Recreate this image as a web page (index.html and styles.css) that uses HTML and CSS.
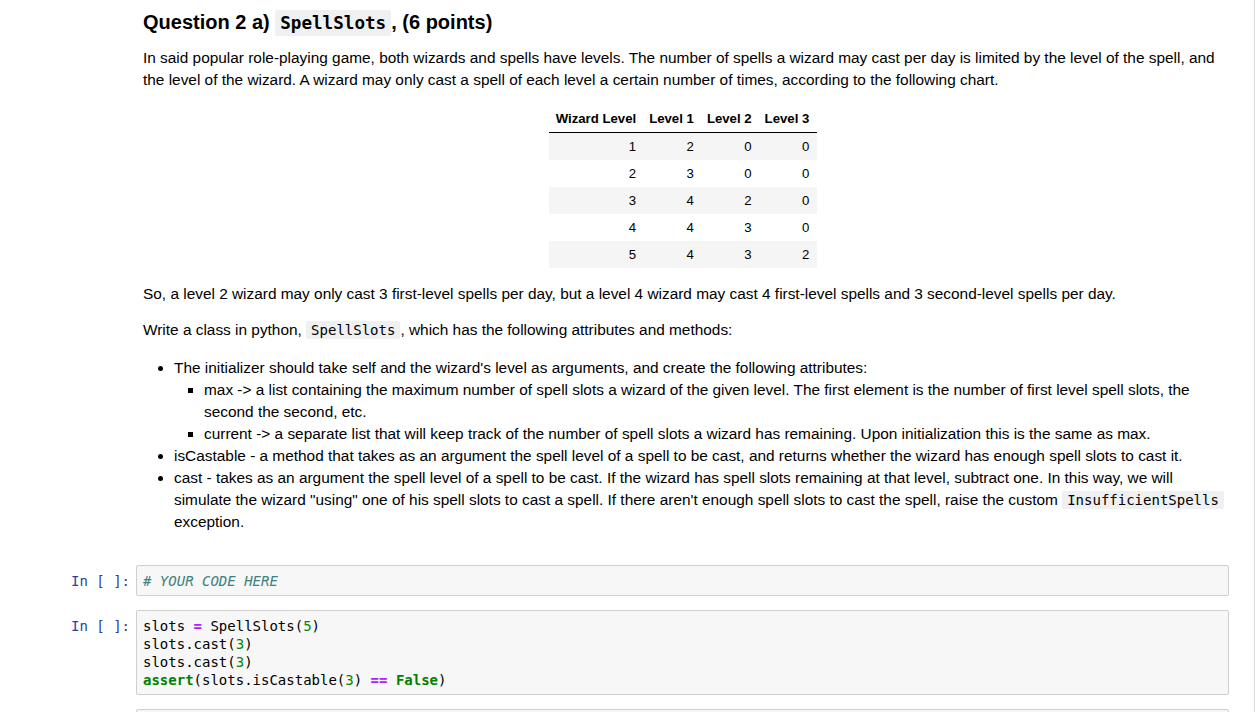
FILE: index.html
```html
<!DOCTYPE html>
<html>
<head>
<meta charset="utf-8">
<link rel="stylesheet" href="styles.css">
</head>
<body>
<div class="notebook">
  <div class="cell md-cell">
    <div class="prompt"></div>
    <div class="rendered">
      <h3 class="title">Question 2 a) <code>SpellSlots</code>, (6 points)</h3>
      <p class="p-first">In said popular role-playing game, both wizards and spells have levels. The number of spells a wizard may cast per day is limited by the level of the spell, and the level of the wizard. A wizard may only cast a spell of each level a certain number of times, according to the following chart.</p>
      <table class="chart">
        <thead>
          <tr><th>Wizard Level</th><th>Level 1</th><th>Level 2</th><th>Level 3</th></tr>
        </thead>
        <tbody>
          <tr><td>1</td><td>2</td><td>0</td><td>0</td></tr>
          <tr><td>2</td><td>3</td><td>0</td><td>0</td></tr>
          <tr><td>3</td><td>4</td><td>2</td><td>0</td></tr>
          <tr><td>4</td><td>4</td><td>3</td><td>0</td></tr>
          <tr><td>5</td><td>4</td><td>3</td><td>2</td></tr>
        </tbody>
      </table>
      <p class="p-after-table">So, a level 2 wizard may only cast 3 first-level spells per day, but a level 4 wizard may cast 4 first-level spells and 3 second-level spells per day.</p>
      <p class="p-write">Write a class in python, <code>SpellSlots</code>, which has the following attributes and methods:</p>
      <ul class="list">
        <li>The initializer should take self and the wizard's level as arguments, and create the following attributes:
          <ul class="sublist">
            <li>max -&gt; a list containing the maximum number of spell slots a wizard of the given level. The first element is the number of first level spell slots, the second the second, etc.</li>
            <li>current -&gt; a separate list that will keep track of the number of spell slots a wizard has remaining. Upon initialization this is the same as max.</li>
          </ul>
        </li>
        <li>isCastable - a method that takes as an argument the spell level of a spell to be cast, and returns whether the wizard has enough spell slots to cast it.</li>
        <li>cast - takes as an argument the spell level of a spell to be cast. If the wizard has spell slots remaining at that level, subtract one. In this way, we will simulate the wizard "using" one of his spell slots to cast a spell. If there aren't enough spell slots to cast the spell, raise the custom <code>InsufficientSpells</code> exception.</li>
      </ul>
    </div>
  </div>

  <div class="cell code-cell">
    <div class="prompt in-prompt">In&nbsp;[&nbsp;]:</div>
    <div class="input">
      <div class="line"><span class="cm">#&nbsp;YOUR CODE HERE</span></div>
    </div>
  </div>

  <div class="cell code-cell">
    <div class="prompt in-prompt">In&nbsp;[&nbsp;]:</div>
    <div class="input">
      <div class="line">slots <span class="op">=</span> SpellSlots(<span class="num">5</span>)</div>
      <div class="line">slots.cast(<span class="num">3</span>)</div>
      <div class="line">slots.cast(<span class="num">3</span>)</div>
      <div class="line"><span class="kw">assert</span>(slots.isCastable(<span class="num">3</span>) <span class="op">==</span> <span class="kw">False</span>)</div>
    </div>
  </div>

  <div class="cell code-cell">
    <div class="prompt in-prompt"></div>
    <div class="input">
      <div class="line">&nbsp;</div>
    </div>
  </div>
</div>
</body>
</html>
```

FILE: styles.css
```css
html, body {
  margin: 0;
  padding: 0;
  background: #ffffff;
  overflow: hidden;
}

body {
  font-family: "Liberation Sans", Arial, sans-serif;
  color: #000000;
}

.notebook {
  width: 1255px;
  height: 712px;
  overflow: hidden;
  box-sizing: border-box;
  padding: 9px 25px 0 0;
  border-right: 1px solid #dcdcdc;
}

.cell {
  display: flex;
  align-items: flex-start;
}

.prompt {
  width: 136px;
  flex: none;
  box-sizing: border-box;
  padding-right: 6px;
  text-align: right;
}

.in-prompt {
  font-family: "DejaVu Sans Mono", "Liberation Mono", monospace;
  font-size: 14px;
  line-height: 18px;
  padding-top: 7px;
  color: #303f9f;
}

.rendered {
  flex: 1;
  min-width: 0;
  padding-left: 7px;
  font-size: 15.4px;
  line-height: 22px;
}

.rendered code {
  font-family: "DejaVu Sans Mono", "Liberation Mono", monospace;
  font-size: 14px;
  background: #eff0f1;
  padding: 1px 5px;
  border-radius: 2px;
}

.title {
  margin: 0;
  font-size: 20px;
  font-weight: bold;
  line-height: 26px;
}

.title code {
  font-size: 17.6px;
  font-weight: bold;
  padding: 3px 5px;
}

.rendered p {
  margin: 0;
}

.p-first {
  margin-top: 11px !important;
}

.chart {
  margin: 14px auto 0;
  border-collapse: collapse;
  border-spacing: 0;
  font-size: 13.2px;
  line-height: 17px;
  position: relative;
  left: -3px;
}

.chart th,
.chart td {
  text-align: right;
  padding: 5px 6.5px;
  white-space: nowrap;
}

.chart th:last-child,
.chart td:last-child {
  padding-right: 7.5px;
}

.chart thead th {
  font-weight: bold;
  border-bottom: 1px solid #000000;
}

.chart tbody tr:nth-child(odd) {
  background: #f5f5f5;
}

.p-after-table {
  margin-top: 15px !important;
}

.p-write {
  margin-top: 14px !important;
}

.list {
  margin: 16px 0 0;
  padding-left: 31px;
  list-style-type: disc;
}

.sublist {
  margin: 0;
  padding-left: 30px;
  list-style-type: square;
}

.md-cell {
  margin-bottom: 32px;
}

.code-cell {
  margin-bottom: 14px;
}

.input {
  flex: 1;
  min-width: 0;
  background: #f7f7f7;
  border: 1px solid #cfcfcf;
  border-radius: 2px;
  padding: 6px 6px 5px;
}

.line {
  font-family: "DejaVu Sans Mono", "Liberation Mono", monospace;
  font-size: 14px;
  line-height: 18px;
  height: 18px;
  white-space: pre;
  color: #000000;
}

.cm {
  color: #408080;
  font-style: italic;
}

.op {
  color: #aa22ff;
  font-weight: bold;
}

.num {
  color: #008800;
}

.kw {
  color: #008000;
  font-weight: bold;
}
```
